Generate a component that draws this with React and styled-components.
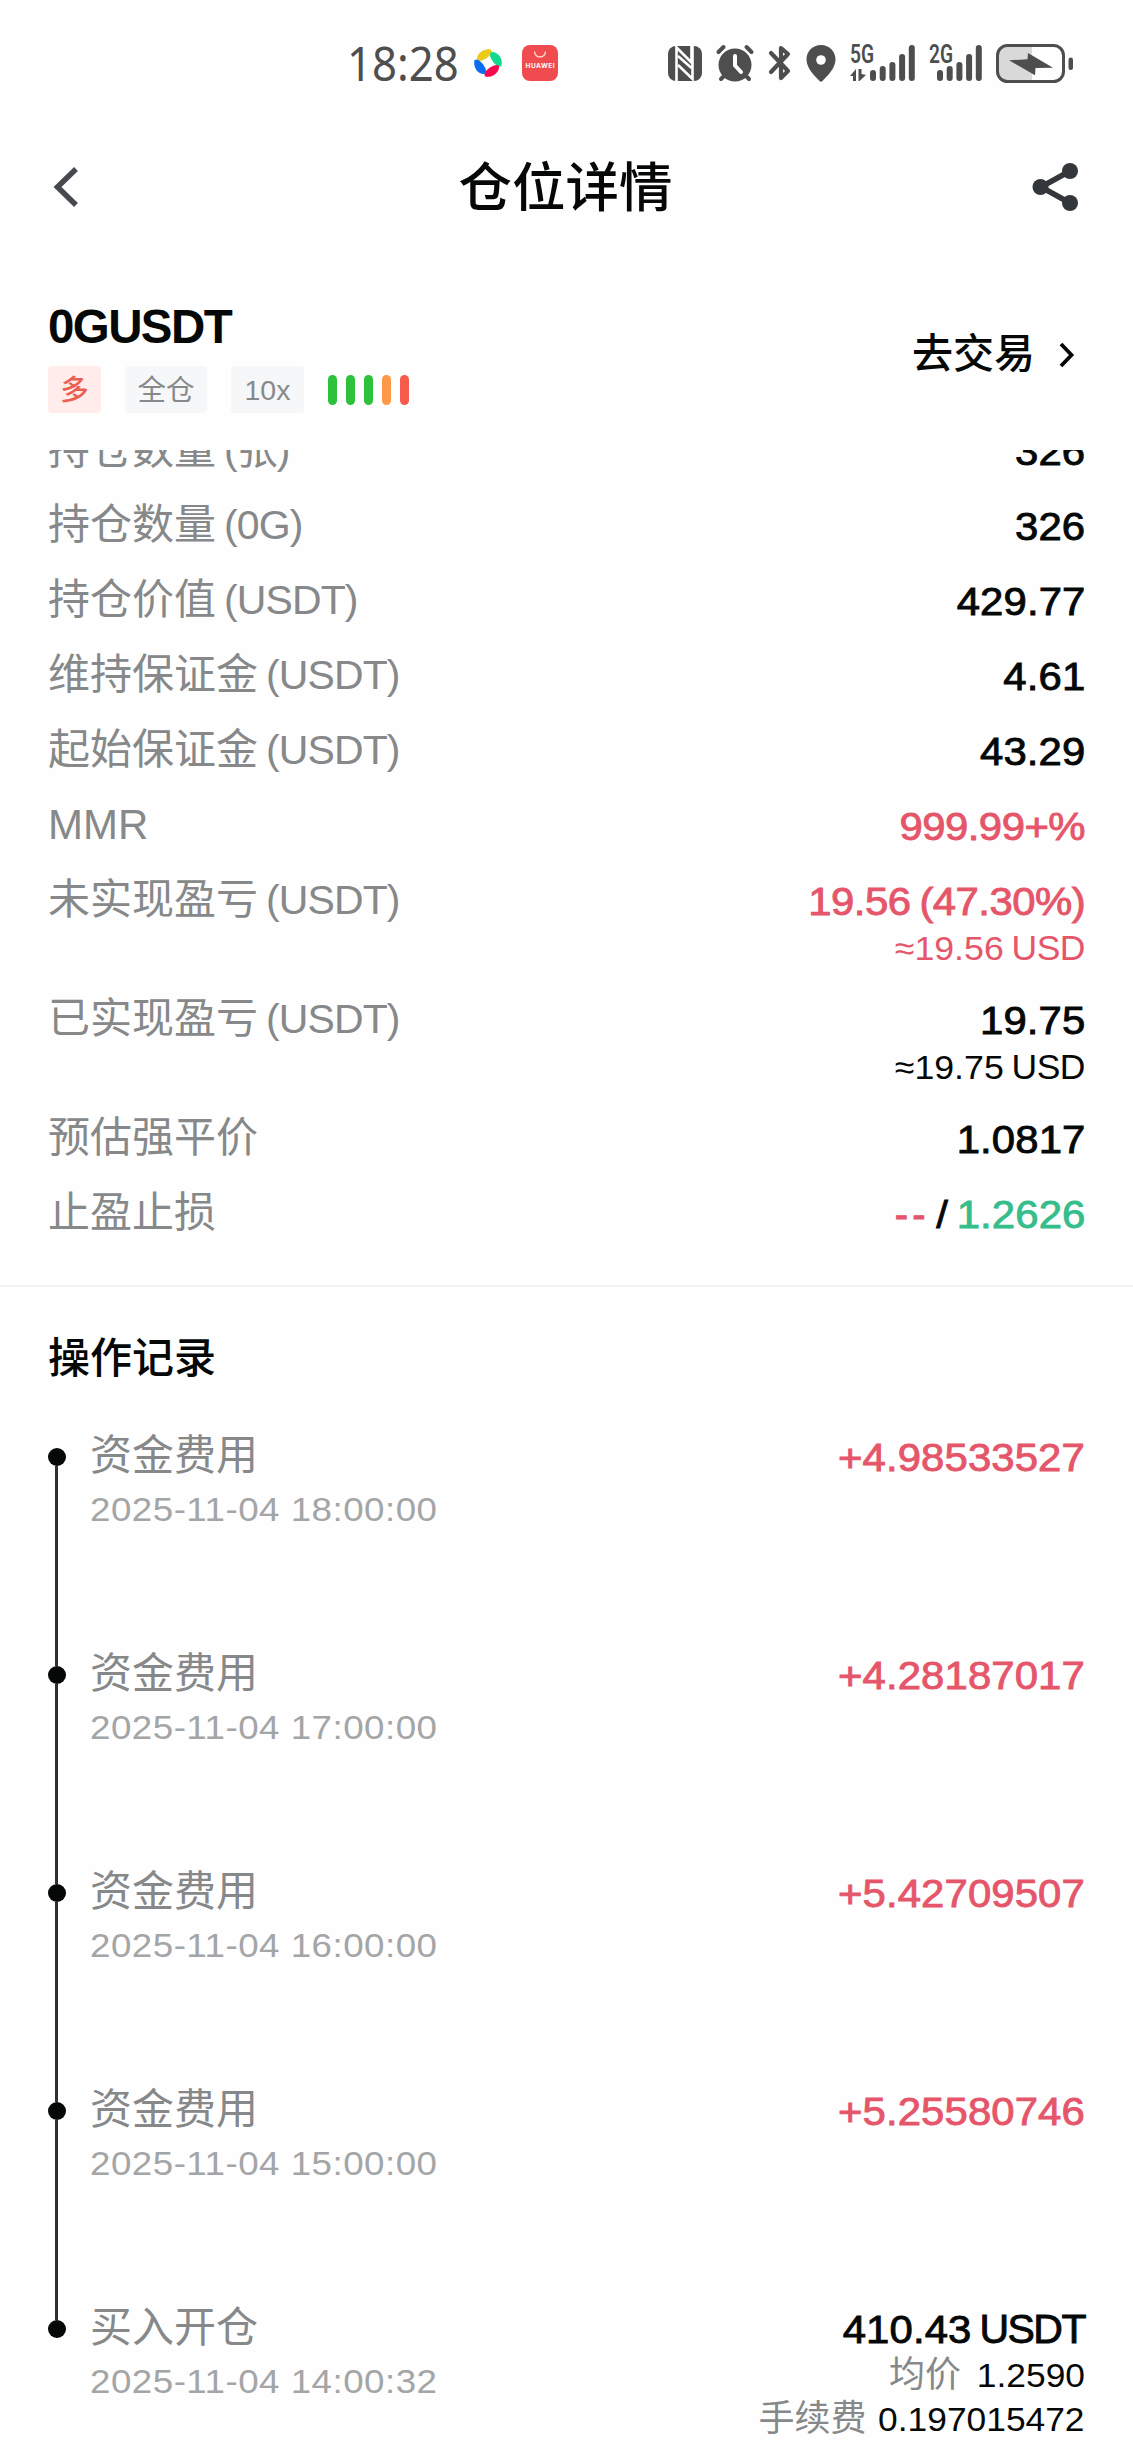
import React from "react";
import styled, { createGlobalStyle } from "styled-components";

// Data for the position

const position = [
  { label: "持仓数量", unit: "(张)", value: "326" },
  { label: "持仓数量", unit: "(0G)", value: "326" },
  { label: "持仓价值", unit: "(USDT)", value: "429.77" },
  { label: "维持保证金", unit: "(USDT)", value: "4.61" },
  { label: "起始保证金", unit: "(USDT)", value: "43.29" },
  { label: "MMR", value: "999.99+%", tone: "down", tight: true },
  { label: "未实现盈亏", unit: "(USDT)", value: "19.56 (47.30%)", approx: "≈19.56", tone: "down", tight: true },
  { label: "已实现盈亏", unit: "(USDT)", value: "19.75", approx: "≈19.75" },
  { label: "预估强平价", value: "1.0817" },
];

// Data for the history

const records = [
  { title: "资金费用", time: "2025-11-04 18:00:00", amount: "+4.98533527" },
  { title: "资金费用", time: "2025-11-04 17:00:00", amount: "+4.28187017" },
  { title: "资金费用", time: "2025-11-04 16:00:00", amount: "+5.42709507" },
  { title: "资金费用", time: "2025-11-04 15:00:00", amount: "+5.25580746" },
  {
    title: "买入开仓",
    time: "2025-11-04 14:00:32",
    amount: "410.43",
    currency: "USDT",
    details: [
      { name: "均价", value: "1.2590" },
      { name: "手续费", value: "0.197015472" },
    ],
  },
];

const levels = ["#2dc23c", "#2dc23c", "#2dc23c", "#ff9849", "#f75b4e"];

const tones = { down: "#e5566a", up: "#35bd8b", plain: "#050807" };

// Status bar drawings

function Swirl() {
  return (
    <svg width="30" height="30" viewBox="0 0 30 30">
      <path d="M4 10C5 4 12 0 18 1.500Q20 5 15 9Q10 13 6 13Q3.500 13 4 10Z" fill="#ebcb16" />
      <path d="M20 4C26 5 30 11 28.500 18Q25 20 21 15Q17 10 17 7Q17 3.500 20 4Z" fill="#13d98c" />
      <path d="M26 20C25 26 18 30 12 28.500Q10 25 15 21Q20 17 24 17Q26.500 17 26 20Z" fill="#f5084f" />
      <path d="M10 26C4 25 0 19 1.500 12Q5 10 9 15Q13 20 13 23Q13 26.500 10 26Z" fill="#0a6cf0" />
    </svg>
  );
}

function StoreBadge() {
  return (
    <svg width="36" height="36" viewBox="0 0 36 36">
      <rect width="36" height="36" rx="8" fill="#f04b4e" />
      <path d="M12.500 6.500a5.500 5.500 0 0 0 11 0" fill="none" stroke="#ffd9c9" strokeWidth="1.400" />
      <text x="18" y="23" textAnchor="middle" textLength="29" fontSize="6.500" fontWeight="700" fontFamily="Inter, sans-serif" fill="#fff">HUAWEI</text>
    </svg>
  );
}

function Nfc() {
  return (
    <svg width="34" height="35" viewBox="0 0 34 35">
      <rect width="34" height="35" rx="8" fill="#4e4e4e" />
      <path d="M8.500 35V1.500L23.500 16.500V0" fill="none" stroke="#fff" strokeWidth="2.600" />
      <path d="M10 10L23.500 22M10 19L24.500 33V0" fill="none" stroke="#fff" strokeWidth="2.600" />
    </svg>
  );
}

function Alarm() {
  return (
    <svg width="38" height="37" viewBox="0 0 38 37">
      <circle cx="19" cy="20" r="16.500" fill="#4e4e4e" />
      <path d="M1 8L8 1M37 8L30 1" stroke="#fefefe" strokeWidth="9" />
      <path d="M2.500 7L7.500 2M35.500 7L30.500 2M5 34L9 30M33 34L29 30" stroke="#4e4e4e" strokeWidth="4" strokeLinecap="round" />
      <path d="M19 11V20.500L25 27" fill="none" stroke="#fff" strokeWidth="4" strokeLinecap="round" strokeLinejoin="round" />
    </svg>
  );
}

function Bluetooth() {
  return (
    <svg width="24" height="38" viewBox="0 0 24 38">
      <path d="M3 9L20 27L13 34V4L20 10L3 28" fill="none" stroke="#4e4e4e" strokeWidth="4.200" strokeLinecap="round" strokeLinejoin="round" />
    </svg>
  );
}

function Pin() {
  return (
    <svg width="30" height="37" viewBox="0 0 30 37">
      <path d="M15 0C6.500 0 .5 6.500 .5 14.500C.5 24 10 32 13.500 36Q15 37.500 16.500 36C20 32 29.500 24 29.500 14.500C29.500 6.500 23.500 0 15 0Z" fill="#4e4e4e" />
      <circle cx="15" cy="15" r="4.800" fill="#fff" />
    </svg>
  );
}

function Signal({ name, start, arrows }) {
  const tops = [25, 21, 17, 9, 0];
  return (
    <svg width={start + 45} height="37" viewBox={`0 0 ${start + 45} 37`}>
      <text x="0" y="17.500" textLength="24" lengthAdjust="spacingAndGlyphs" fontSize="25" fontWeight="600" fontFamily="Roboto, sans-serif" fill="#4e4e4e">{name}</text>
      {arrows && <path d="M0 31L6 24V36H3V31ZM8.500 24H11.500V29L16 30L9.500 36H8.500Z" fill="#4e4e4e" />}
      {tops.map((top, index) => (
        <rect key={top} x={start + index * 9.7} y={top} width="6" height={36 - top} rx="3" fill="#4e4e4e" />
      ))}
    </svg>
  );
}

function Battery() {
  return (
    <svg width="78" height="39" viewBox="0 0 78 39">
      <path d="M36 2H11Q2 2 2 11V28Q2 37 11 37H36Z" fill="#d9d9d9" />
      <rect x="1.500" y="1.500" width="66" height="36" rx="10" fill="none" stroke="#4e4e4e" strokeWidth="3" />
      <path d="M13 16.300L31.500 15.300L32 9L57 23.700L39.500 24L39 31.300Z" fill="#4e4e4e" />
      <rect x="72.500" y="13.500" width="4.500" height="12.500" rx="2.200" fill="#4e4e4e" />
    </svg>
  );
}

// Header drawings

function Back() {
  return (
    <svg width="28" height="42" viewBox="0 0 28 42">
      <path d="M26 3L7.500 21L26 39" fill="none" stroke="#46494d" strokeWidth="5.500" />
    </svg>
  );
}

function Share() {
  return (
    <svg width="48" height="50" viewBox="0 0 48 50">
      <path d="M39 9L10 25L39 41" fill="none" stroke="#33363a" strokeWidth="5.500" />
      <circle cx="9.500" cy="25" r="8" fill="#33363a" />
      <circle cx="39" cy="9" r="8" fill="#33363a" />
      <circle cx="39" cy="41" r="8" fill="#33363a" />
    </svg>
  );
}

function Forward() {
  return (
    <svg width="16" height="28" viewBox="0 0 16 28">
      <path d="M2 3L12.500 14L2 25" fill="none" stroke="#050807" strokeWidth="3.800" />
    </svg>
  );
}

export default function App() {
  return (
    <Page>
      <GlobalStyle />

      <StatusBar>
        <Clock>18:28</Clock>
        <Swirl />
        <StoreBadge />
        <StatusIcons>
          <Nfc />
          <Alarm />
          <Bluetooth />
          <Pin />
          <Signal name="5G" start={20} arrows />
          <Signal name="2G" start={8} />
          <Battery />
        </StatusIcons>
      </StatusBar>

      <Header>
        <Back />
        <Title>仓位详情</Title>
        <Share />
      </Header>

      <Pair>
        <div>
          <Symbol>0GUSDT</Symbol>
          <Tags>
            <Tag $red $width="53px">多</Tag>
            <Tag $width="82px">全仓</Tag>
            <Tag $width="73px">10x</Tag>
            <Levels>
              {levels.map((color, index) => (
                <Level key={index} $color={color} />
              ))}
            </Levels>
          </Tags>
        </div>
        <TradeLink>
          去交易
          <Forward />
        </TradeLink>
      </Pair>

      <Details>
        <Rows>
          {position.map((row, index) => (
            <Row key={index} $tall={Boolean(row.approx)}>
              <Label>
                {row.label}
                {row.unit && <Unit>{row.unit}</Unit>}
              </Label>
              <Values>
                <Value $tone={row.tone} $tight={row.tight}>{row.value}</Value>
                {row.approx && (
                  <Approx $tone={row.tone}>
                    <Small>{row.approx}</Small>
                    <Usd>USD</Usd>
                  </Approx>
                )}
              </Values>
            </Row>
          ))}
          <Row>
            <Label>止盈止损</Label>
            <Limits>
              <Dashes>--</Dashes>
              <Value>/</Value>
              <Value $tone="up">1.2626</Value>
            </Limits>
          </Row>
        </Rows>
      </Details>

      <History>
        <SectionTitle>操作记录</SectionTitle>
        {records.map((record, index) => (
          <Record key={index}>
            <Track>
              <Dot />
              {index < records.length - 1 && <Line />}
            </Track>
            <Info>
              <Label>{record.title}</Label>
              <Time>{record.time}</Time>
            </Info>
            <Values>
              <Amount>
                <Value $tone={record.currency ? "plain" : "down"}>{record.amount}</Value>
                {record.currency && <Currency>{record.currency}</Currency>}
              </Amount>
              {record.details?.map((detail) => (
                <Detail key={detail.name}>
                  <DetailName>{detail.name}</DetailName>
                  <DetailValue>{detail.value}</DetailValue>
                </Detail>
              ))}
            </Values>
          </Record>
        ))}
      </History>
    </Page>
  );
}

// CSS for this file

const GlobalStyle = createGlobalStyle`
  * {
    box-sizing: border-box;
  }
  body {
    margin: 0;
    background: #fefefe;
  }
  svg {
    display: block;
    flex: none;
    overflow: visible;
  }
`;

const Page = styled.div`
  width: 1133px;
  height: 2453px;
  overflow: hidden;
  background: #fefefe;
  color: #050807;
  font-family: "Liberation Sans", "Noto Sans CJK SC", sans-serif;
  white-space: nowrap;
`;

const StatusBar = styled.div`
  height: 126px;
  padding: 0 59px 0 347px;
  display: flex;
  align-items: center;
`;

const Clock = styled.div`
  width: 126px;
  font-family: "Noto Sans", sans-serif;
  font-size: 47px;
  line-height: 60px;
  color: #4e4e4e;
  transform: scaleX(0.93);
  transform-origin: left;
  & + svg {
    margin-right: 19px;
  }
`;

const StatusIcons = styled.div`
  margin-left: auto;
  display: flex;
  align-items: center;
  gap: 14px;
`;

const Header = styled.header`
  height: 122px;
  padding: 0 54px 0 50px;
  display: flex;
  align-items: center;
  justify-content: space-between;
`;

const Title = styled.h1`
  margin: 4px 0 0 22px;
  font-size: 53.5px;
  font-weight: 500;
  line-height: 80px;
`;

const Pair = styled.section`
  height: 202px;
  padding: 49px 57px 0 48px;
  display: flex;
  justify-content: space-between;
`;

const Symbol = styled.h2`
  margin: 0 0 10px;
  font-size: 47.5px;
  line-height: 59px;
  letter-spacing: -1.6px;
`;

const Tags = styled.div`
  display: flex;
  align-items: center;
  gap: 24px;
`;

const Tag = styled.span`
  width: ${(props) => props.$width};
  height: 47px;
  border-radius: 4px;
  text-align: center;
  font-size: 28.5px;
  font-weight: ${(props) => (props.$red ? 500 : 400)};
  line-height: 48px;
  background: ${(props) => (props.$red ? "#ffeceb" : "#f5f7f9")};
  color: ${(props) => (props.$red ? "#ea5f51" : "#88898b")};
`;

const Levels = styled.div`
  display: flex;
  gap: 9px;
`;

const Level = styled.span`
  width: 9px;
  height: 30px;
  border-radius: 5px;
  background: ${(props) => props.$color};
`;

const TradeLink = styled.div`
  height: 114px;
  padding-right: 1px;
  display: flex;
  align-items: center;
  gap: 24px;
  font-size: 41px;
  font-weight: 500;
  line-height: 48px;
  svg {
    margin-top: 1px;
  }
`;

const Details = styled.section`
  height: 837px;
  overflow: hidden;
  border-bottom: 2px solid #f2f3f3;
`;

const Rows = styled.div`
  margin-top: -37px;
  padding: 0 48px;
`;

const Row = styled.div`
  height: ${(props) => (props.$tall ? "119px" : "75px")};
  display: flex;
  justify-content: space-between;
`;

const Label = styled.div`
  font-size: 42px;
  line-height: 74px;
  color: #868889;
`;

const Unit = styled.span`
  margin-left: 8px;
  font-size: 41px;
  letter-spacing: -0.9px;
`;

const Values = styled.div`
  display: flex;
  flex-direction: column;
  align-items: flex-end;
`;

// the digits are a little wider than the font draws them
const Value = styled.div`
  font-size: 39.5px;
  line-height: 77px;
  letter-spacing: ${(props) => (props.$tight ? "-0.5px" : "0.1px")};
  word-spacing: -2px;
  color: ${(props) => tones[props.$tone || "plain"]};
  -webkit-text-stroke: 0.9px currentColor;
  transform: scaleX(1.06);
  transform-origin: right;
`;

const Approx = styled.div`
  margin-top: -14px;
  display: flex;
  font-size: 34px;
  line-height: 45px;
  color: ${(props) => tones[props.$tone || "plain"]};
`;

const Small = styled.span`
  transform: scaleX(1.05);
  transform-origin: right;
`;

const Usd = styled.span`
  margin-left: 8px;
  font-size: 35.5px;
  letter-spacing: -0.5px;
`;

const Limits = styled.div`
  display: flex;
  gap: 16px;
`;

const Dashes = styled.span`
  margin-right: -9px;
  font-size: 40px;
  line-height: 77px;
  letter-spacing: 4px;
  color: #e5566a;
  -webkit-text-stroke: 0.9px currentColor;
`;

const History = styled.section`
  padding: 34px 48px 0;
`;

const SectionTitle = styled.h3`
  margin: 0 0 23px;
  font-size: 42px;
  font-weight: 500;
  line-height: 75px;
`;

const Record = styled.div`
  height: 218px;
  display: flex;
`;

const Track = styled.div`
  width: 18px;
  margin-right: 24px;
  padding-top: 29px;
  display: flex;
  flex-direction: column;
  align-items: center;
`;

const Dot = styled.span`
  flex: none;
  width: 18px;
  height: 18px;
  border-radius: 50%;
  background: #050807;
`;

const Line = styled.span`
  flex: none;
  width: 3px;
  height: 200px;
  margin-left: -1px;
  background: #2d302f;
`;

const Info = styled.div`
  flex: 1;
`;

const Time = styled.div`
  margin-top: -6px;
  font-size: 34px;
  line-height: 45px;
  letter-spacing: 0.45px;
  color: #a3a5a6;
  transform: scaleX(1.08);
  transform-origin: left;
`;

const Amount = styled.div`
  display: flex;
`;

const Currency = styled.span`
  margin-left: 8px;
  font-size: 41px;
  line-height: 77px;
  letter-spacing: -1.5px;
  -webkit-text-stroke: 0.9px currentColor;
`;

const Detail = styled.div`
  display: flex;
  font-size: 34px;
  line-height: 44px;
  &:nth-child(2) {
    margin-top: -15px;
  }
`;

const DetailName = styled.span`
  margin-right: 20px;
  font-size: 36px;
  color: #868889;
`;

const DetailValue = styled.span`
  transform: scaleX(1.04);
  transform-origin: right;
`;
